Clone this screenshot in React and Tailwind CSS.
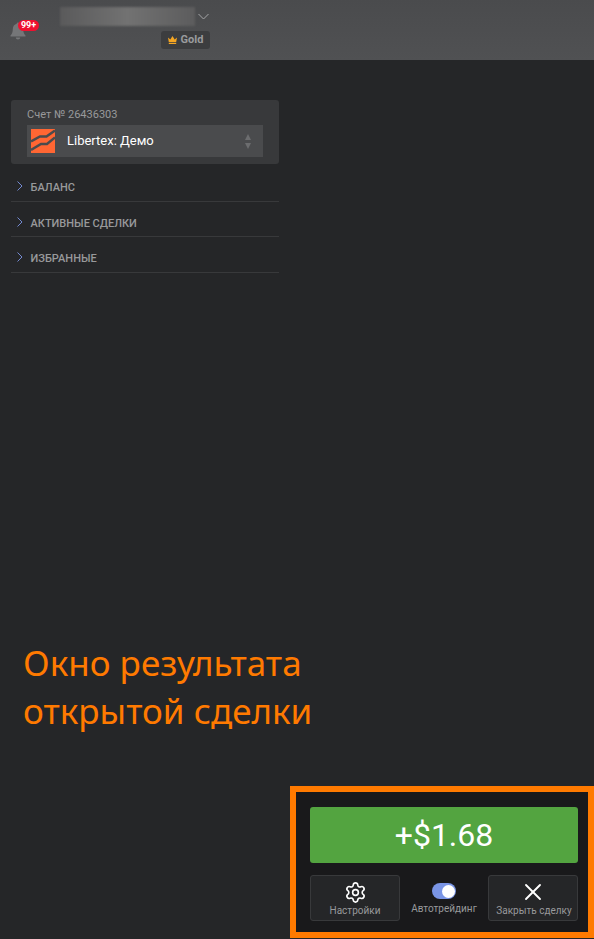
import { Settings, X } from "lucide-react";
import React from "react";

const ROBOTO = "font-['Roboto',sans-serif]";

const SECTIONS = ["БАЛАНС", "АКТИВНЫЕ СДЕЛКИ", "ИЗБРАННЫЕ"];

function Bell() {
  return (
    <svg width="16" height="18" viewBox="0 0 16 18" className="text-[#757678]">
      <path
        fill="currentColor"
        d="M8 0.5c0.8 0 1.3 0.6 1.3 1.3 2.4 0.6 3.9 2.6 3.9 5.2 0 3.2 0.7 4.8 2.3 6.4v1.1H0.5v-1.1C2.1 11.8 2.8 10.2 2.8 7c0-2.6 1.5-4.6 3.9-5.2C6.7 1.100 7.200 0.500 8 0.500zM5.800 15.500h4.400c0 1.200-1 2-2.200 2s-2.200-0.800-2.200-2z"
      />
    </svg>
  );
}

function Crown() {
  return (
    <svg width="9" height="8" viewBox="0 0 9 8">
      <path fill="#f5a623" d="M0 1.500l2.300 2L4.500 0l2.200 3.500 2.300-2-0.800 4.500H0.800zM0.800 6.700h7.400V8H0.800z" />
    </svg>
  );
}

function LibertexLogo() {
  return (
    <svg width="24" height="24" viewBox="0 0 24 24">
      <rect width="24" height="24" fill="#ff6633" />
      <path d="M0 12.500L9 7.500H15.500L24 1.500" fill="none" stroke="#4a4b4d" strokeWidth="2.500" />
      <path d="M0 21L10 15H16L24 8.500" fill="none" stroke="#4a4b4d" strokeWidth="2.500" />
    </svg>
  );
}

function Chevron({ className, d, w, h }) {
  return (
    <svg width={w} height={h} viewBox={`0 0 ${w} ${h}`} className={className}>
      <path d={d} fill="none" stroke="currentColor" strokeWidth="1" />
    </svg>
  );
}

function Header() {
  return (
    <div className="flex h-[60px] bg-gradient-to-b from-[#4a4b4d] to-[#505153]">
      <div className="relative ml-[10px] mt-[22px] h-[18px] w-[16px]">
        <Bell />
        <span className="absolute -top-[2px] left-[8px] flex h-[11px] w-[21px] items-center justify-center rounded-full bg-[#f0102f] text-[9px] font-bold text-white">
          99+
        </span>
      </div>
      <div className="ml-[34px] mt-[7px] w-[150px]">
        <div className="flex items-center">
          <div className="h-[19px] w-[135px] bg-gradient-to-r from-[#5a5a5b] via-[#727272] to-[#5c5c5d] blur-[1px]" />
          <Chevron className="ml-[3px] text-[#a5a6a8]" w={11} h={7} d="M0.500 1L5.500 6L10.500 1" />
        </div>
        <div className="mt-[5px] ml-[101px] flex h-[18px] w-[49px] items-center justify-center gap-[4px] rounded-[3px] bg-[#3c3d3f]">
          <Crown />
          <span className="text-[11px] font-bold text-[#9a9b9d]">Gold</span>
        </div>
      </div>
    </div>
  );
}

function Account() {
  return (
    <div className="mt-[40px] ml-[11px] h-[64px] w-[268px] rounded-[3px] bg-[#38393b] px-[16px] pt-[8px]">
      <div className="text-[11px] leading-[14px] text-[#98999b]">Счет № 26436303</div>
      <div className="mt-[3px] flex h-[32px] items-center bg-[#4a4b4d] pl-[4px] pr-[11px]">
        <LibertexLogo />
        <span className="ml-[12px] flex-1 text-[13px] text-white">Libertex: Демо</span>
        <div className="flex flex-col gap-[3px] pr-[1px]">
          <div className="h-0 w-0 border-x-[3px] border-b-[6px] border-x-transparent border-b-[#6c6d6f]" />
          <div className="h-0 w-0 border-x-[3px] border-t-[6px] border-x-transparent border-t-[#6c6d6f]" />
        </div>
      </div>
    </div>
  );
}

function Sections() {
  return (
    <div className="ml-[11px] mt-[2px] w-[268px]">
      {SECTIONS.map((label) => (
        <div key={label} className="flex h-[35.500px] items-center border-b border-[#38393b] pl-[6px] pt-[10px]">
          <Chevron className="-mt-[4px] text-[#7389d0]" w={6} h={10} d="M0.500 0.500L5 5L0.500 9.500" />
          <span className="ml-[7.500px] text-[11px] font-medium text-[#98999b]">{label}</span>
        </div>
      ))}
    </div>
  );
}

function TradeResult() {
  return (
    <div className="ml-auto mb-[1px] h-[152px] w-[304px] border-[6px] border-[#ff7a00] bg-[#19191b] pl-[14px] pr-[10px] pt-[15px]">
      <div className="flex h-[56px] items-center justify-center rounded-[3px] bg-[#53a440] text-[32px] text-white">
        +$1.68
      </div>
      <div className="mt-[12px] flex items-start justify-between">
        <button className="flex h-[46px] w-[90px] flex-col items-center rounded-[3px] border border-[#38393b] bg-[#252628] pt-[7px] text-[10px] text-[#98999b]">
          <Settings size={23} strokeWidth={1.7} className="-mt-[2px] text-white" />
          <span className="mt-[1px] leading-[12px]">Настройки</span>
        </button>
        <div className="flex flex-col items-center pt-[8px] text-[10px] text-[#98999b]">
          <div className="relative h-[16px] w-[24px] rounded-full bg-[#7a95e6]">
            <span className="absolute right-[1px] top-[1.500px] h-[13px] w-[13px] rounded-full bg-white" />
          </div>
          <span className="mt-[4px] leading-[12px]">Автотрейдинг</span>
        </div>
        <button className="flex h-[46px] w-[90px] flex-col items-center rounded-[3px] border border-[#38393b] bg-[#252628] pt-[7px] text-[10px] text-[#98999b]">
          <X size={28} strokeWidth={1.6} className="-mt-[5px] -mb-[2px] text-white" />
          <span className="mt-[1px] ml-[2px] leading-[12px]">Закрыть сделку</span>
        </button>
      </div>
    </div>
  );
}

export default function App() {
  return (
    <div className={`flex h-[939px] w-[594px] flex-col overflow-hidden bg-[#252628] ${ROBOTO}`}>
      <Header />
      <Account />
      <Sections />
      <div className="ml-[23px] mt-auto mb-[51px] font-['Noto_Sans',sans-serif] text-[35px] leading-[48px] text-[#ff7a00]">
        Окно результата
        <br />
        открытой сделки
      </div>
      <TradeResult />
    </div>
  );
}
